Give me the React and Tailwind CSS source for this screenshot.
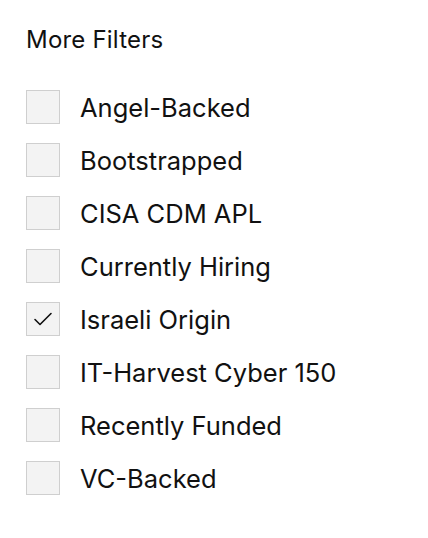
export default function App() {
  const items = [
    ["Angel-Backed", false],
    ["Bootstrapped", false],
    ["CISA CDM APL", false],
    ["Currently Hiring", false],
    ["Israeli Origin", true],
    ["IT-Harvest Cyber 150", false],
    ["Recently Funded", false],
    ["VC-Backed", false],
  ];
  return (
    <div className="w-[428px] h-[538px] bg-white pl-[26px] pt-[25px] text-[#111]" style={{ fontFamily: "Inter, 'Noto Sans', sans-serif" }}>
      <div className="text-[24px] leading-[30px] tracking-[0.2px]">More Filters</div>
      <div className="mt-[35px] flex flex-col gap-[19px]">
        {items.map(([label, checked]) => (
          <div key={label} className="flex items-center h-[34px]">
            <div className="w-[34px] h-[34px] border border-[#cfcfcf] bg-[#f3f3f3] flex items-center justify-center shrink-0">
              {checked && (
                <svg width="24" height="24" viewBox="0 0 24 24" fill="none" stroke="#111" strokeWidth="1.6" strokeLinecap="round" strokeLinejoin="round">
                  <path d="M4 12.5l5 5L20 6.5" />
                </svg>
              )}
            </div>
            <span className="ml-[20px] pt-[1px] text-[25.5px] leading-[34px]">{label}</span>
          </div>
        ))}
      </div>
    </div>
  );
}
